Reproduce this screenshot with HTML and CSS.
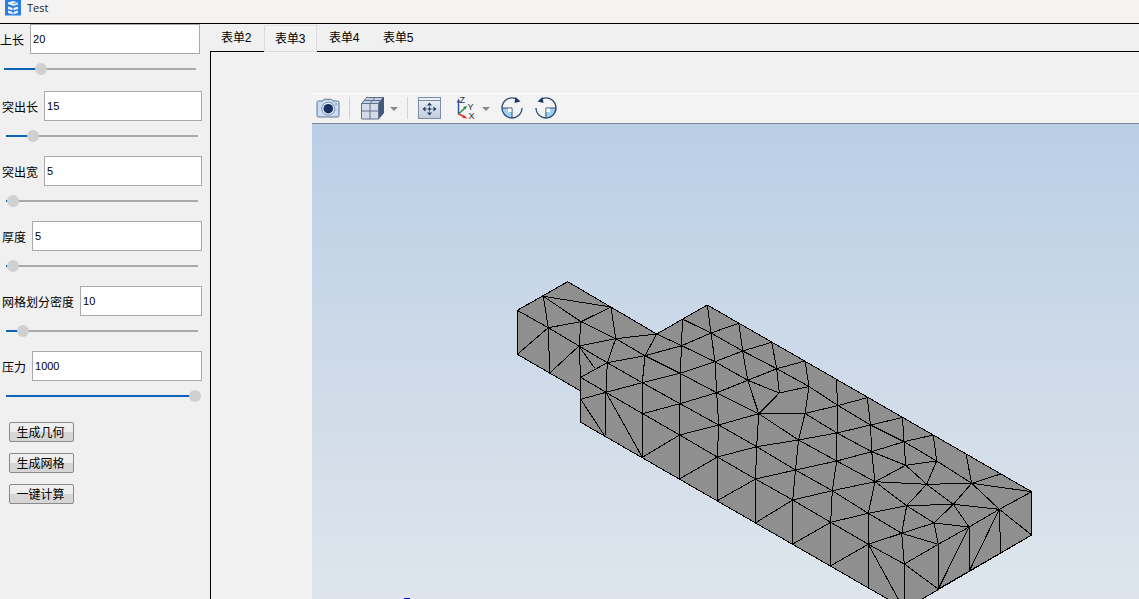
FILE: index.html
```html
<!DOCTYPE html>
<html lang="zh">
<head>
<meta charset="utf-8">
<title>Test</title>
<link rel="stylesheet" href="styles.css">
</head>
<body>
<div class="app">
  <header class="titlebar">
    <svg class="app-icon" width="16" height="16" viewBox="0 0 16 16">
      <rect width="16" height="15.500" fill="#2a7de1"/>
      <path d="M3 2.500 8 1l5 1.500v2L8 6 3 4.500zM3 6.500 8 8l5-1.500v2.500L8 10.500 3 9zM3 10.500 8 12l5-1.500V13l-5 1.500L3 13z" fill="#eaf3fd"/>
      <path d="M3 4.500 8 6v1.500M8 10.500V12M8 3.500l5-1" stroke="#2a7de1" stroke-width=".8" fill="none"/>
      <path d="M8 6v8.500" stroke="#2a7de1" stroke-width="1" fill="none"/>
    </svg>
    <span class="title-text">Test</span>
  </header>
  <div class="body-row">
    <aside class="sidebar">
      <div class="group group-first">
        <div class="field"><label>上长</label><input value="20"></div>
        <div class="slider"><div class="fill" style="width:37px"></div></div>
      </div>
      <div class="group">
        <div class="field"><label>突出长</label><input value="15"></div>
        <div class="slider"><div class="fill" style="width:27px"></div></div>
      </div>
      <div class="group">
        <div class="field"><label>突出宽</label><input value="5"></div>
        <div class="slider"><div class="fill" style="width:7px"></div></div>
      </div>
      <div class="group">
        <div class="field"><label>厚度</label><input value="5"></div>
        <div class="slider"><div class="fill" style="width:7px"></div></div>
      </div>
      <div class="group">
        <div class="field"><label>网格划分密度</label><input value="10"></div>
        <div class="slider"><div class="fill" style="width:17px"></div></div>
      </div>
      <div class="group">
        <div class="field"><label>压力</label><input value="1000"></div>
        <div class="slider"><div class="fill" style="width:189px"></div></div>
      </div>
      <div class="buttons">
        <button>生成几何</button>
        <button>生成网格</button>
        <button>一键计算</button>
      </div>
    </aside>
    <main class="workspace">
      <nav class="tabs">
        <div class="tab">表单2</div>
        <div class="tab tab-active">表单3</div>
        <div class="tab">表单4</div>
        <div class="tab">表单5</div>
      </nav>
      <section class="pane">
        <div class="toolbar">
          <svg class="icon icon-camera" width="24" height="24" viewBox="0 0 24 24">
            <path d="M2.500 5H7l1-1.700h7.500L17 5h4.500q1.500 0 1.500 1.500v13q0 1.500-1.500 1.500h-19Q1 21 1 19.500v-13Q1 5 2.500 5z" fill="#c9dcf1" stroke="#5d7598"/>
            <circle cx="12.300" cy="12.700" r="6.500" fill="#e4eef9" stroke="#5d7598" stroke-width=".8"/>
            <circle cx="12.300" cy="12.700" r="4.800" fill="#17305f"/>
            <circle cx="20" cy="8" r=".8" fill="#5d7598"/>
          </svg>
          <span class="sep sep-a"></span>
          <svg class="icon icon-cube" width="25" height="24" viewBox="0 0 25 24">
            <path d="M1.500 7.500 6.500 1.500H23.500L18.500 7.500z" fill="#c4d0e0" stroke="#5f7190"/>
            <path d="M18.500 7.500 23.500 1.500V17L18.500 23z" fill="#45597d" stroke="#45597d"/>
            <path d="M1.500 7.500H18.500V23H1.500z" fill="#d5dce7" stroke="#5f7190"/>
            <path d="M1.500 15H18.500M10 7.500V23M10 7.500 15 1.500M4 4.500H21" stroke="#5f7190" fill="none"/>
          </svg>
          <span class="caret caret-a"></span>
          <span class="sep sep-b"></span>
          <svg class="icon icon-fit" width="26" height="24" viewBox="0 0 26 24">
            <defs><linearGradient id="fitbg" x1="0" y1="0" x2="0" y2="1"><stop offset="0" stop-color="#eef2f7"/><stop offset="1" stop-color="#c2ccdb"/></linearGradient></defs>
            <rect x="2.500" y="1.500" width="22" height="21" fill="url(#fitbg)" stroke="#7d8ca6"/>
            <path d="M2.500 4.500H24.500" stroke="#7d8ca6"/>
            <path d="M13.500 6.500l2.500 3h-5zM13.500 19.500l-2.500-3h5zM6.500 13l3-2.500v5zM20.500 13l-3-2.500v5z" fill="#1f3a63"/>
            <path d="M13.500 9v8M9 13h9" stroke="#6f84a5" fill="none"/>
            <circle cx="13.500" cy="13" r="1.200" fill="#1f3a63"/>
          </svg>
          <svg class="icon icon-axes" width="26" height="24" viewBox="0 0 26 24">
            <path d="M4.500 18V5" stroke="#2b4fa0" stroke-width="1.400" fill="none"/>
            <path d="M4.500 2.500 2.700 6.500h3.600z" fill="#2b4fa0"/>
            <path d="M4.500 18 11 12" stroke="#1a8a3a" stroke-width="1.400" fill="none"/>
            <path d="M13 10l-4 1 2.200 2.600z" fill="#1a8a3a"/>
            <path d="M4.500 18 11 21" stroke="#e0302a" stroke-width="1.400" fill="none"/>
            <path d="M13.500 22.500 9.500 19l-1 3z" fill="#e0302a"/>
            <text x="5.500" y="6.500" class="axis-label">Z</text>
            <text x="13.500" y="13.500" class="axis-label">Y</text>
            <text x="14.500" y="23" class="axis-label">X</text>
          </svg>
          <span class="caret caret-b"></span>
          <svg class="icon icon-rot-a" width="24" height="24" viewBox="0 0 24 24">
            <path d="M12 12V22A10 10 0 0 1 2 12z" fill="#9fd0f2"/>
            <path d="M12 12V22M2 12H12" stroke="#2f4a72" fill="none"/>
            <rect x="8" y="12.500" width="3.500" height="3.500" fill="#fff"/>
            <path d="M22 12A10 10 0 1 1 16 2.800" stroke="#2f4a72" stroke-width="1.300" fill="none"/>
            <path d="M20.500 5.500 14.500 7 15.500 1z" fill="#1c3766"/>
          </svg>
          <svg class="icon icon-rot-b" width="24" height="24" viewBox="0 0 24 24">
            <g transform="matrix(-1 0 0 1 24 0)">
              <path d="M12 12V22A10 10 0 0 1 2 12z" fill="#9fd0f2"/>
              <path d="M12 12V22M2 12H12" stroke="#2f4a72" fill="none"/>
              <rect x="8" y="12.500" width="3.500" height="3.500" fill="#fff"/>
              <path d="M22 12A10 10 0 1 1 16 2.800" stroke="#2f4a72" stroke-width="1.300" fill="none"/>
              <path d="M20.500 5.500 14.500 7 15.500 1z" fill="#1c3766"/>
            </g>
          </svg>
        </div>
        <div class="view">
          <svg class="mesh" width="827" height="475" viewBox="312 124 827 475">
            <polygon class="solid" points="517.3,310.3 567.7,281.7 656.7,334 707.3,305 1031.7,491.7 1031.7,535 905,609 580.700,422.300 580.700,391 517.300,354.300"/>
            <path class="wire" d="
M543.3 296.300L611 307
M543.300 296.300L581 321.700L615.700 338.700L645 355.700L680 373.300L716.700 392.700L758.700 413.700L798.500 440L836.700 461L875 481.700L906.700 505.700L934 523L938.300 544.300
M517.300 310.300L548.300 327.700L579 346L607.300 362.700L642.300 382.700L680 403.700L718.700 425L756.700 446.700L795.500 470L832.300 490.700L868.300 513.300L901.700 533.300L938.300 544.300
M611 307L581 321.700L548.300 327.700L517.300 354.300
M543.300 296.300L548.300 327.700L549.700 373
M549.700 373L579 346
M581 321.700L579 346L580.700 377.300L580.700 391
M611 307L615.700 338.700L607.300 362.700L580.700 377.300
M607.300 362.700L606 392.300L605 436.300
M579 346L615.700 338.700L656.700 334
M579 346L594.700 368.300
M656.700 334L645 355.700L642.300 382.700L642.700 413.700L642.300 457.300
M607.300 362.700L645 355.700L681.700 345.700L711 333L738.700 323.300
M656.700 334L681.700 345.700L715 361.700L747.700 380.300L779.300 393L809 386.500
M779.300 393L758.700 413.700
M682.300 319L681.700 345.700L680 373.300L680 403.700L679.700 435L679.500 479
M682.300 319L711 333L742.700 351L776.700 368.700L809 386.500L838 405.500L870.500 425L904 441.700L936.700 461L971.700 483.300L999.300 509.300L1031.700 535
M707.300 305L711 333L715 361.700L716.700 392.700L718.700 425L717.300 457L717.300 500.700
M738.700 323.300L742.700 351L747.700 380.300L758.700 413.700L756.700 446.700L755.500 479L755.700 522.700
M771.700 342.300L776.700 368.700L779.300 393
M805 361L809 386.500L805 413.500L798.500 440L795.500 470L792.700 500L792.700 544
M836 379.300L838 405.500L837 433L836.700 461L832.300 490.700L830.700 522.300L830.700 565.700
M867.300 397.700L870.500 425L871.700 451.700L875 481.700L868.300 513.300L868.300 544.300L868.300 588.300
M902.500 417.500L904 441.700L905.700 465.300
M933.300 435L936.700 461L926.700 484.300L906.700 505.700L901.700 533.300L904.300 564L904.300 599
M966 454L971.700 483.300L953.300 504.300L934 523
M580.700 399.300L606 392.300L642.300 382.700L680 373.300L715 361.700L742.700 351L771.700 342.300
M642.700 413.700L680 403.700L716.700 392.700L747.700 380.300L776.700 368.700L805 361
M642.300 457.300L679.700 435L718.700 425L758.700 413.700L805 413.500L838 405.500L867.300 397.700
M717.300 457L756.700 446.700L798.500 440L837 433L870.500 425L902.500 417.500
M755.500 479L795.500 470L836.700 461L871.700 451.700L904 441.700L933.300 435
M792.700 500L832.300 490.700L875 481.700L926.700 484.300L971.700 483.300L1031.700 491.700
M830.700 522.300L868.300 513.300L906.700 505.700L953.300 504.300L999.300 509.300
M868.300 544.300L901.700 533.300L934 523L969 527L999.300 509.300L1031.700 491.700
M904.300 564L938.300 544.300L969 527
M938.300 544.300L938.300 589L969 527L969.300 571
M904.300 564L938.300 589
M999.300 509.300L969.300 571
M999.300 509.300L1000.700 553.300
M953.300 504.300L969 527
M971.700 483.300L1000.700 474
M679.700 435L717.300 457L755.500 479L792.700 500L830.700 522.300L868.300 544.300L904.300 564
M642.700 413.700L679.700 435
M606 392.300L642.700 413.700
M606 392.300L642.300 457.300
M580.700 399.300L605 436.300
M580.700 377.300L606 392.300
M805 413.500L837 433L871.700 451.700L905.700 465.300L926.700 484.300L953.300 504.300
M875 481.700L905.700 465.300L936.700 461
M679.500 479L717.300 457
M717.300 500.700L755.500 479
M755.700 522.700L792.700 500
M792.700 544L830.700 522.300
M830.700 565.700L868.300 544.300
M868.300 544.300L898.300 599
M938.300 589L1031.700 535"/>
            <rect class="blue-mark" x="404" y="598" width="6" height="1"/>
          </svg>
        </div>
      </section>
    </main>
  </div>
</div>
</body>
</html>
```

FILE: styles.css
```css
* { box-sizing: border-box; }
html, body {
  margin: 0;
  height: 100%;
  overflow: hidden;
  background: #f0f0f0;
  color: #000;
  font-family: "Liberation Sans", "Noto Sans CJK SC", sans-serif;
  font-size: 12px;
}
.app { display: flex; flex-direction: column; height: 599px; }
.titlebar {
  display: flex;
  align-items: flex-start;
  height: 24px;
  flex: none;
  padding-left: 5px;
  background: #f4f3f1;
  border-bottom: 1px solid #000;
}
.app-icon { flex: none; display: block; }
.title-text {
  margin-left: 6px;
  font-family: "Open Sans", sans-serif;
  font-size: 11px;
  line-height: 15px;
  color: #222;
}
.body-row { display: flex; flex: 1; min-height: 0; }
.sidebar {
  flex: none;
  width: 210px;
  padding-left: 2px;
  background: #f0f0f0;
}
.group { height: 65px; width: 200px; }
.group-first { height: 67px; margin-left: -2px; }
.field { display: flex; align-items: flex-start; height: 30px; gap: 6px; }
.field label { flex: none; padding-top: 2px; line-height: 30px; white-space: nowrap; }
.field input {
  flex: 1;
  min-width: 0;
  height: 30px;
  padding: 0 2px;
  border: 1px solid #a9a9a9;
  border-radius: 0;
  outline: 0;
  background: #fff;
  color: #000;
  font-family: "Liberation Sans", sans-serif;
  font-size: 11px;
}
.slider {
  display: flex;
  align-items: center;
  width: 192px;
  height: 2px;
  margin: 14px 0 0 4px;
  background: #a9a9a9;
}
.fill { position: relative; height: 2px; background: #0d63b5; }
.fill::after {
  content: "";
  position: absolute;
  right: -6px;
  top: -5px;
  width: 12px;
  height: 12px;
  border-radius: 50%;
  background: #d0d0d0;
}
.buttons {
  display: flex;
  flex-direction: column;
  align-items: flex-start;
  gap: 11px;
  margin: 6px 0 0 7px;
}
.buttons button {
  width: 65px;
  height: 20px;
  padding: 2px 2px 0 0;
  border: 1px solid #8a8a8a;
  border-radius: 2px;
  background: linear-gradient(#f0f0f0 0, #ececec 50%, #d6d6d6 50%, #d6d6d6 100%);
  color: #000;
  font: inherit;
  line-height: 16px;
}
.workspace { display: flex; flex-direction: column; flex: 1; min-width: 0; background: #f2f2f2; }
.tabs {
  display: flex;
  flex: none;
  height: 28px;
  border-bottom: 1px solid #000;
  background: #f0f0f0;
}
.tab {
  flex: none;
  width: 54px;
  height: 27px;
  padding: 2px 0 0 11px;
  line-height: 25px;
  letter-spacing: -0.1px;
}
.tab-active {
  width: 53px;
  height: 27px;
  margin: 1px 1px 0 0;
  padding: 1px 0 0 10px;
  line-height: 25px;
  background: #f2f2f2;
  border: 1px solid #dcdcdc;
  border-top-color: #e4e4e4;
}
.pane {
  display: flex;
  flex-direction: column;
  flex: 1;
  min-height: 0;
  padding: 41px 0 0 101px;
  border-left: 1px solid #000;
  background: #f2f2f2;
}
.toolbar {
  display: flex;
  align-items: flex-start;
  flex: none;
  height: 31px;
  padding: 2px 0 0 4px;
  background: #f3f3f3;
  border-top: 1px solid #fff;
  border-bottom: 1px solid #7f8a99;
}
.icon { display: block; flex: none; }
.sep { flex: none; width: 1px; height: 22px; margin-top: 1px; background: #d2d2d2; }
.sep-a { margin-left: 9px; }
.sep-b { margin-left: 9px; }
.icon-cube { margin-left: 10px; }
.caret {
  flex: none;
  width: 0;
  height: 0;
  margin-top: 11px;
  border-left: 4px solid transparent;
  border-right: 4px solid transparent;
  border-top: 4px solid #8a8a8a;
}
.caret-a { margin-left: 5px; }
.caret-b { margin-left: 2px; }
.icon-fit { margin-left: 8px; }
.icon-axes { margin-left: 12px; }
.icon-rot-a { margin-left: 10px; }
.icon-rot-b { margin-left: 10px; }
.axis-label { font-family: "Liberation Sans", sans-serif; font-size: 9px; fill: #2a3440; }
.view {
  flex: 1;
  min-height: 0;
  overflow: hidden;
  background: linear-gradient(#b9cee5 0, #c6d6e8 30%, #d3dde9 65%, #dee5ec 100%);
}
.mesh { display: block; }
.solid { fill: #8f8f8f; stroke: #000; stroke-width: 1; shape-rendering: crispEdges; }
.wire { fill: none; stroke: #000; stroke-width: 1; shape-rendering: crispEdges; }
.blue-mark { fill: #0000ff; }
```
